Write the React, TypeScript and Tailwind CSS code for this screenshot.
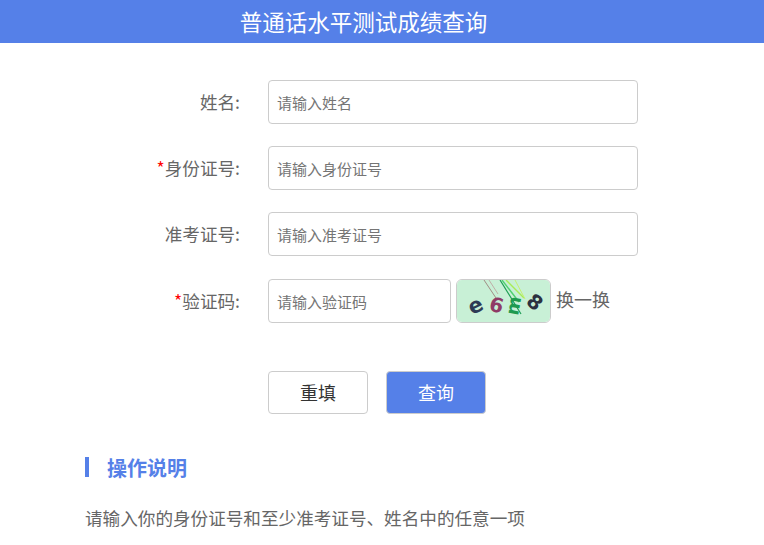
const font = { fontFamily: '"Noto Sans CJK SC", "Liberation Sans", sans-serif' };

function Captcha() {
  const glyph = { fontFamily: '"DejaVu Sans", sans-serif', fontWeight: 700 };
  return (
    <svg width="93" height="42" viewBox="0 0 93 42" className="block">
      <rect width="93" height="42" fill="#c8f0d6" />
      <path d="M27 0 L39 18" stroke="#a08c84" strokeWidth="1" fill="none" />
      <path d="M32 0 L41 14" stroke="#c0ada6" strokeWidth="1" fill="none" />
      <path d="M43 0 L64 34" stroke="#1f9d55" strokeWidth="1.2" fill="none" />
      <path d="M45 0 L62 22" stroke="#4fd070" strokeWidth="1.4" fill="none" />
      <path d="M49 0 L67 18" stroke="#a8ec58" strokeWidth="1.4" fill="none" />
      <path d="M58 0 L68 19" stroke="#c4f070" strokeWidth="1" fill="none" />
      <text transform="translate(15 35) rotate(-25)" fontSize="21" fill="#2d3a55" style={glyph}>e</text>
      <text transform="translate(31 30) rotate(15)" fontSize="20" fill="#8f3b66" style={glyph}>6</text>
      <text transform="translate(61 36) rotate(-80)" fontSize="18" fill="#1e9a4f" style={glyph}>m</text>
      <text transform="translate(68 23) rotate(40)" fontSize="20" fill="#2b3140" style={glyph}>8</text>
    </svg>
  );
}

function Label({ text, required }: { text: string; required?: boolean }) {
  return (
    <label className="w-[175px] pr-[3px] text-right text-[17.6px] text-[#666666] leading-[43px] h-[44px] shrink-0">
      {required && <span className="text-[#ff0000]">*</span>}
      {text}:
    </label>
  );
}

function Row({ label, required, placeholder }: { label: string; required?: boolean; placeholder: string }) {
  return (
    <div className="flex items-center h-[44px]">
      <Label text={label} required={required} />
      <input
        placeholder={placeholder}
        className="ml-[25px] w-[370px] h-[44px] border border-[#cccccc] rounded-[4px] px-[8px] text-[15px] placeholder:text-[#757575] outline-none"
      />
    </div>
  );
}

export default function App() {
  return (
    <div className="w-[764px] h-[545px] overflow-hidden bg-white" style={font}>
      {/* Header */}
      <header className="h-[43px] bg-[#5580e8] w-[764px]">
        <h1 className="w-[727px] text-center text-white text-[22.5px] leading-[43px] font-normal">
          普通话水平测试成绩查询
        </h1>
      </header>

      <main className="pl-[68px] pt-[37px]">
        <div className="flex flex-col gap-[22px]">
          <Row label="姓名" placeholder="请输入姓名" />
          <Row label="身份证号" required placeholder="请输入身份证号" />
          <Row label="准考证号" placeholder="请输入准考证号" />
          <div className="flex items-center h-[44px] mt-[1px]">
            <Label text="验证码" required />
            <input
              placeholder="请输入验证码"
              className="ml-[25px] w-[183px] h-[44px] border border-[#cccccc] rounded-[4px] px-[8px] text-[15px] placeholder:text-[#757575] outline-none"
            />
            <div className="ml-[5px] w-[95px] h-[44px] border border-[#cccccc] rounded-[6px] overflow-hidden shrink-0">
              <Captcha />
            </div>
            <span className="ml-[5px] text-[18px] text-[#666666] -mt-[4px]">换一换</span>
          </div>
        </div>

        {/* Buttons */}
        <div className="flex gap-[18px] ml-[200px] mt-[48px]">
          <button className="w-[100px] h-[43px] border border-[#cccccc] rounded-[4px] bg-white text-[18px] text-[#333333]">
            重填
          </button>
          <button className="w-[100px] h-[43px] border border-[#cccccc] rounded-[4px] bg-[#5580e8] text-[18px] text-white">
            查询
          </button>
        </div>
      </main>

      {/* 操作说明 */}
      <section className="pl-[85px] mt-[43px]">
        <h2 className="border-l-[4px] border-[#5580e8] pl-[18px] h-[20px] flex items-center text-[20px] font-bold text-[#5580e8]">
          <span className="mt-[2px]">操作说明</span>
        </h2>
        <p className="mt-[28px] text-[17.6px] text-[#666666] leading-[26px]">
          请输入你的身份证号和至少准考证号、姓名中的任意一项
        </p>
      </section>
    </div>
  );
}
